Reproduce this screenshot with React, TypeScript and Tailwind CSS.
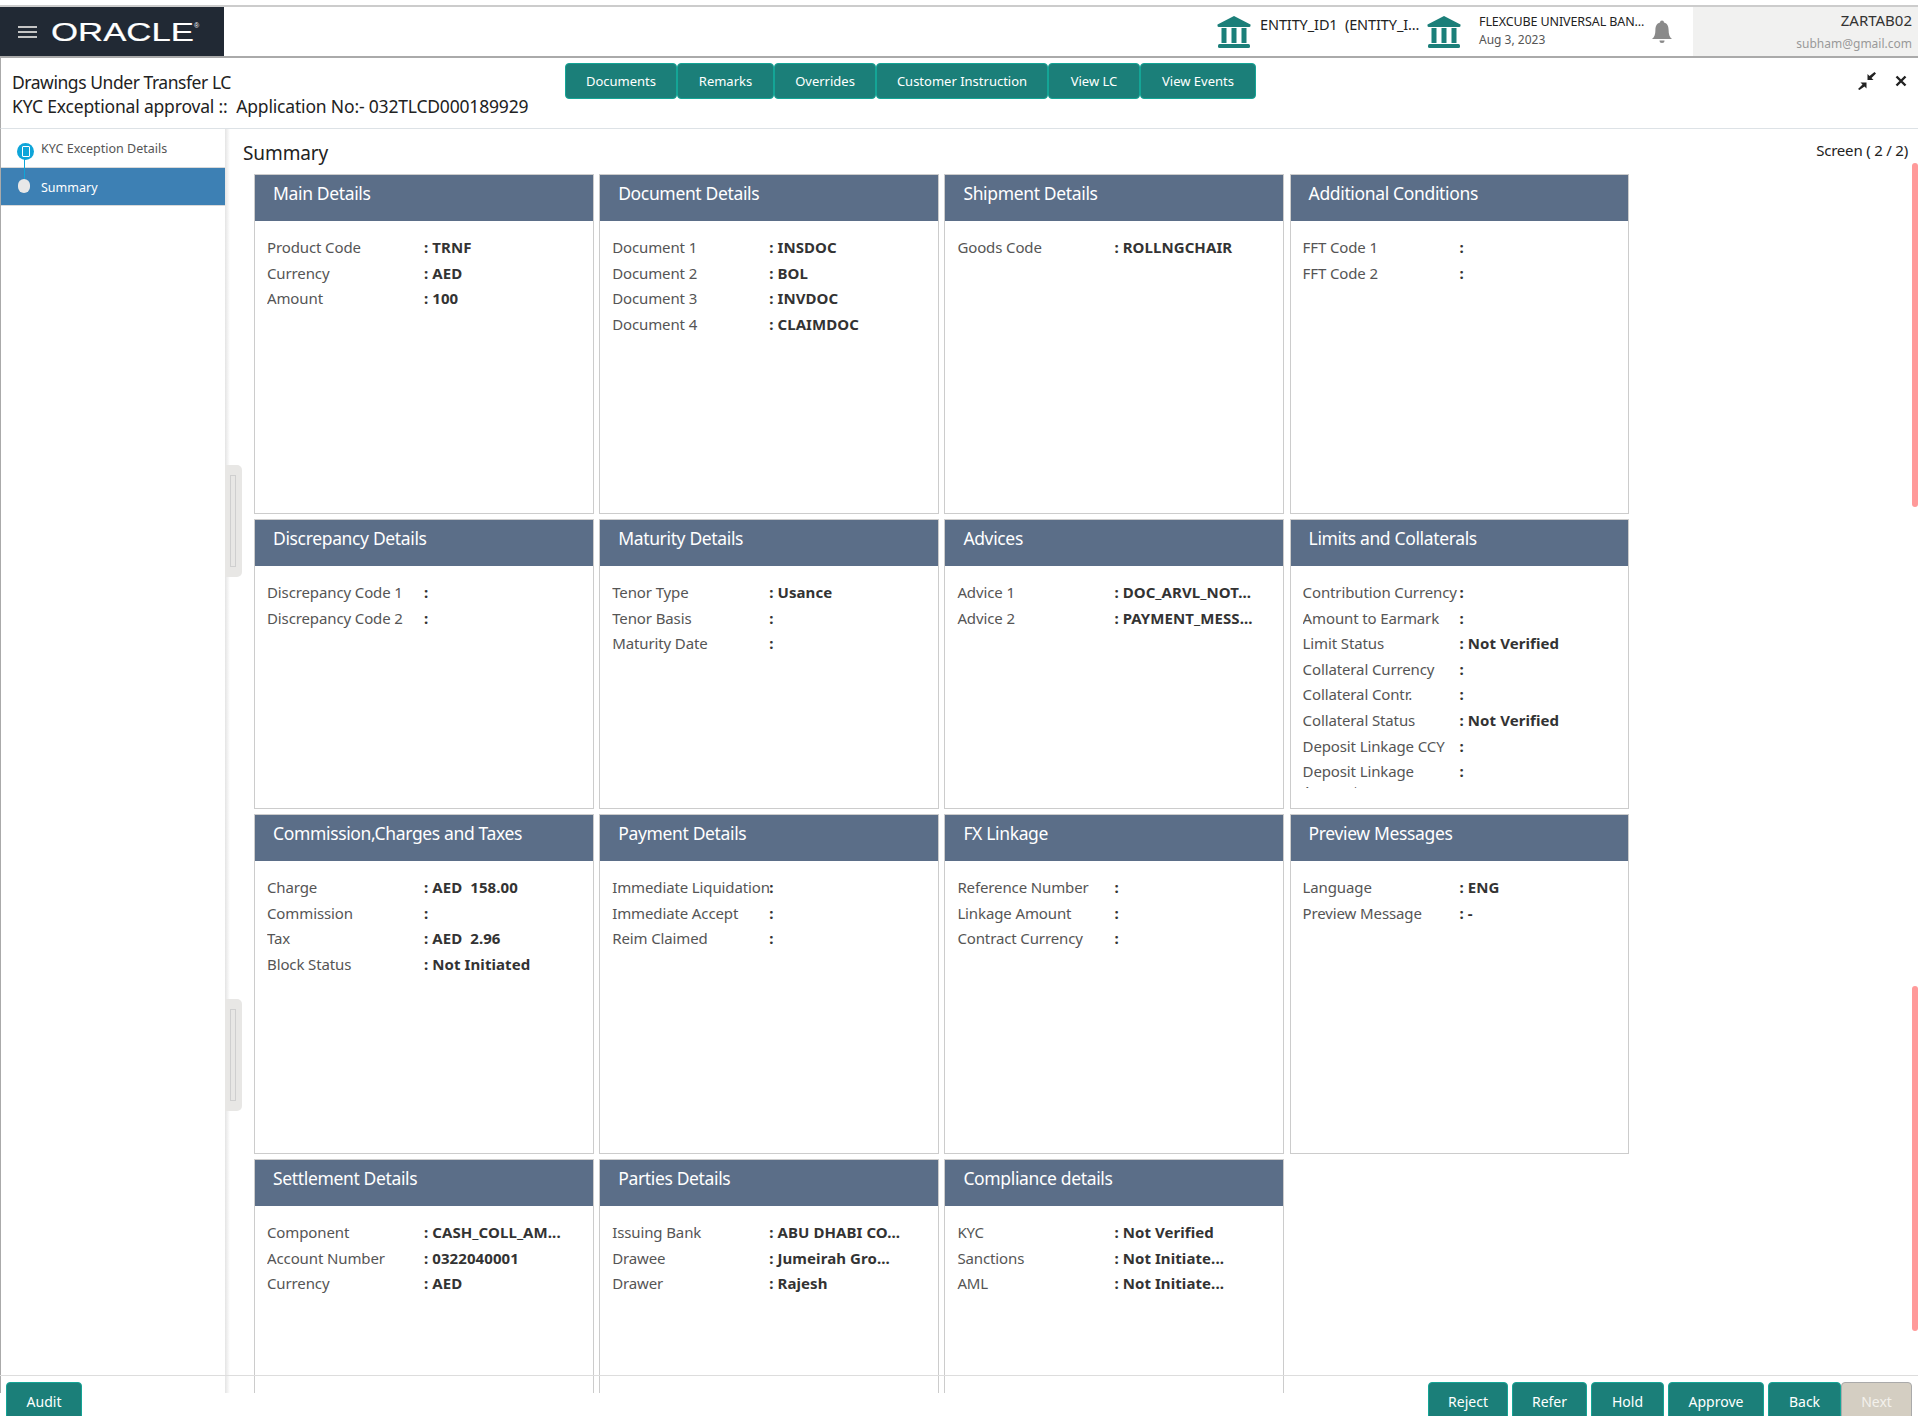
import React from "react";

const font = "font-['Noto_Sans','Open_Sans',sans-serif]";

type Row = [string, string?];
type Card = { title: string; rows: Row[] };

const cards: Card[] = [
  { title: "Main Details", rows: [["Product Code", "TRNF"], ["Currency", "AED"], ["Amount", "100"]] },
  { title: "Document Details", rows: [["Document 1", "INSDOC"], ["Document 2", "BOL"], ["Document 3", "INVDOC"], ["Document 4", "CLAIMDOC"]] },
  { title: "Shipment Details", rows: [["Goods Code", "ROLLNGCHAIR"]] },
  { title: "Additional Conditions", rows: [["FFT Code 1"], ["FFT Code 2"]] },
  { title: "Discrepancy Details", rows: [["Discrepancy Code 1"], ["Discrepancy Code 2"]] },
  { title: "Maturity Details", rows: [["Tenor Type", "Usance"], ["Tenor Basis"], ["Maturity Date"]] },
  { title: "Advices", rows: [["Advice 1", "DOC_ARVL_NOT..."], ["Advice 2", "PAYMENT_MESS..."]] },
  {
    title: "Limits and Collaterals",
    rows: [
      ["Contribution Currency"],
      ["Amount to Earmark"],
      ["Limit Status", "Not Verified"],
      ["Collateral Currency"],
      ["Collateral Contr."],
      ["Collateral Status", "Not Verified"],
      ["Deposit Linkage CCY"],
      ["Deposit Linkage\nAmount"],
    ],
  },
  { title: "Commission,Charges and Taxes", rows: [["Charge", "AED  158.00"], ["Commission"], ["Tax", "AED  2.96"], ["Block Status", "Not Initiated"]] },
  { title: "Payment Details", rows: [["Immediate Liquidation"], ["Immediate Accept"], ["Reim Claimed"]] },
  { title: "FX Linkage", rows: [["Reference Number"], ["Linkage Amount"], ["Contract Currency"]] },
  { title: "Preview Messages", rows: [["Language", "ENG"], ["Preview Message", "-"]] },
  { title: "Settlement Details", rows: [["Component", "CASH_COLL_AM..."], ["Account Number", "0322040001"], ["Currency", "AED"]] },
  { title: "Parties Details", rows: [["Issuing Bank", "ABU DHABI CO..."], ["Drawee", "Jumeirah Gro..."], ["Drawer", "Rajesh"]] },
  { title: "Compliance details", rows: [["KYC", "Not Verified"], ["Sanctions", "Not Initiate..."], ["AML", "Not Initiate..."]] },
];

const topActions = [
  { label: "Documents", w: "w-[112px]" },
  { label: "Remarks", w: "w-[97px]" },
  { label: "Overrides", w: "w-[102px]" },
  { label: "Customer Instruction", w: "w-[172px]" },
  { label: "View LC", w: "w-[92px]" },
  { label: "View Events", w: "w-[116px]" },
];

const footerActions = [
  { label: "Reject", w: "w-[80px]" },
  { label: "Refer", w: "w-[75px]" },
  { label: "Hold", w: "w-[73px]" },
  { label: "Approve", w: "w-[96px]" },
  { label: "Back", w: "w-[73px]" },
];

function BankIcon() {
  return (
    <svg viewBox="0 0 34 32" className="w-[34px] h-[32px] shrink-0" fill="#1b7f79">
      <path d="M17 0 33.5 8.5q.5 2-1 2.5H1.5Q0 10.5.5 8.5Z" />
      <rect x="4.5" y="12" width="5" height="15" />
      <rect x="14.5" y="12" width="5" height="15" />
      <rect x="24.5" y="12" width="5" height="15" />
      <rect x="1" y="28" width="32" height="4" rx="1.5" />
    </svg>
  );
}

function TealButton({ label, w, className = "" }: { label: string; w: string; className?: string }) {
  return (
    <button className={`${w} ${className} shrink-0 rounded-[4px] border border-[#14a596] bg-[#1b7f79] text-white`}>
      {label}
    </button>
  );
}

function SummaryCard({ card }: { card: Card }) {
  return (
    <div className="border border-[#cccccc] bg-white overflow-hidden">
      <div className="h-[46px] bg-[#5b6e88] pl-[18px] pt-[6px] text-[17.5px] leading-[24px] tracking-[-0.35px] text-white">{card.title}</div>
      <div className="ml-[12px] mt-[13.2px] h-[209px] overflow-hidden">
        {card.rows.map(([label, value]) => (
          <div key={label} className="flex py-[2.8px] text-[15px] leading-[20px]">
            <div className="w-[157px] shrink-0 whitespace-pre tracking-[-0.12px] text-[#555555]">{label}</div>
            <div className="font-bold tracking-[0.08px] text-[#333333] whitespace-pre">{value ? `: ${value}` : ":"}</div>
          </div>
        ))}
      </div>
    </div>
  );
}

export default function App() {
  return (
    <div className={`${font} relative w-[1918px] h-[1416px] overflow-hidden bg-white`}>
      <div className="h-[7px] border-b-2 border-[#cccccc]" />

      {/* top bar */}
      <header className="flex h-[51px] border-b-2 border-[#aaaaaa]">
        <div className="flex w-[224px] shrink-0 items-center bg-[#212934] pl-[18px]">
          <div className="flex w-[19px] flex-col gap-[3px]">
            <span className="h-[2px] bg-[#c4c4c4]" />
            <span className="h-[2px] bg-[#c4c4c4]" />
            <span className="h-[2px] bg-[#c4c4c4]" />
          </div>
          <svg viewBox="0 0 150 24" className="ml-[14px] h-[24px] w-[150px] overflow-visible">
            <text x="0" y="20.5" fontFamily="Liberation Sans" fontSize="25" fill="white" stroke="white" strokeWidth="0.2" textLength="143" lengthAdjust="spacingAndGlyphs">
              ORACLE
            </text>
            <text x="143" y="8" fontFamily="Liberation Sans" fontSize="7" fill="white">®</text>
          </svg>
        </div>
        <div className="flex flex-1 items-center">
          <div className="ml-auto flex items-center">
            <BankIcon />
            <div className="ml-[9px] w-[167px] -mt-[14px] whitespace-pre text-[14.5px] tracking-[-0.1px] text-[#222222]">ENTITY_ID1  (ENTITY_I...</div>
            <BankIcon />
            <div className="ml-[18px] w-[171px] -mt-[2px] leading-[18px]">
              <div className="text-[12.5px] tracking-[-0.1px] text-[#222222] whitespace-nowrap">FLEXCUBE UNIVERSAL BAN...</div>
              <div className="text-[12px] text-[#555555]">Aug 3, 2023</div>
            </div>
            <svg viewBox="0 0 24 26" className="h-[26px] w-[24px]" fill="#8a8a8a">
              <path d="M12 1.5a2 2 0 0 1 2 2c3.4 1 4.6 3.8 4.6 7.5 0 4.5 1 7 3.4 9H2c2.4-2 3.4-4.5 3.4-9 0-3.7 1.2-6.5 4.6-7.5a2 2 0 0 1 2-2Z" />
              <path d="M9.5 21.5h5a2.5 2.5 0 0 1-5 0Z" />
            </svg>
            <div className="ml-[19px] flex h-[49px] w-[225px] flex-col items-end justify-center gap-[3px] bg-[#f1f1f0] pr-[6px] leading-[20px]">
              <div className="text-[15px] text-[#333333]">ZARTAB02</div>
              <div className="mt-[1px] text-[12px] text-[#999999]">subham@gmail.com</div>
            </div>
          </div>
        </div>
      </header>

      {/* sub header */}
      <div className="relative flex h-[71px] border-b border-[#dde2e6] border-l border-l-[#aaaaaa]">
        <div className="w-[551px] shrink-0 pl-[11px] pt-[12px] text-[17.5px] leading-[24px] tracking-[-0.18px] text-[#222222]">
          <div className="tracking-[-0.45px]">Drawings Under Transfer LC</div>
          <div className="whitespace-pre">KYC Exceptional approval ::  Application No:- 032TLCD000189929</div>
        </div>
        <div className="mt-[5px] ml-[13px] flex h-[36px] text-[13px]">
          {topActions.map((a) => (
            <TealButton key={a.label} label={a.label} w={a.w} className="pt-[2px]" />
          ))}
        </div>
        <div className="ml-auto mr-[11px] mt-[14px] flex h-[18px] items-center gap-[18px]">
          <svg viewBox="0 0 20 18" className="h-[18px] w-[20px]" fill="#222222">
            <path d="M19 1.5 14.5 6l2 2H10.5V2l2 2L17.5 0Z" />
            <path d="M1 17 5.5 12.5l-2-2H9.5v6l-2-2L2.5 18Z" />
          </svg>
          <svg viewBox="0 0 12 12" className="h-[12px] w-[12px]" stroke="#222222" strokeWidth="2.4">
            <path d="M1.5 1.5l9 9M10.5 1.5l-9 9" />
          </svg>
        </div>
      </div>

      {/* body */}
      <div className="flex h-[1264px] overflow-hidden">
        <aside className="w-[225px] shrink-0 border-l border-[#aaaaaa] relative text-[12.5px]">
          <div className="flex h-[39px] items-center border-b border-[#d9d9d9] pl-[40px] pt-[2px] text-[#555555]">KYC Exception Details</div>
          <div className="flex h-[38px] items-center border-b border-[#d9d9d9] bg-[#3d80b4] pl-[40px] pt-[3px] text-white">Summary</div>
          {/* stepper */}
          <div className="absolute left-[23px] top-[28px] h-[25px] w-[1px] bg-[#0ea5d9]" />
          <div className="absolute left-[16px] top-[14px] flex h-[17px] w-[17px] items-center justify-center rounded-full bg-[#0ea5d9]">
            <div className="h-[11px] w-[8px] rounded-[1px] border-[1.5px] border-white" />
          </div>
          <div className="absolute left-[17px] top-[50px] h-[14px] w-[12px] rounded-full bg-[#e8e8e8]" />
        </aside>
        <main className="relative flex-1 bg-gradient-to-r from-[#e4e4e4] to-white to-[5px] bg-[length:5px_100%] bg-no-repeat">
          <div className="flex h-[45px] items-start justify-between pl-[18px] pr-[10px]">
            <div className="mt-[10px] text-[19px] leading-[28px] tracking-[-0.1px] text-[#222222]">Summary</div>
            <div className="mt-[11px] text-[15px] leading-[20px] tracking-[-0.2px] text-[#222222]">Screen ( 2 / 2)</div>
          </div>
          <div className="ml-[29px] grid grid-cols-[repeat(4,339.5px)] grid-rows-[340px_290px_340px_340px] gap-x-[5.7px] gap-y-[5px]">
            {cards.map((c) => (
              <SummaryCard key={c.title} card={c} />
            ))}
          </div>
        </main>
      </div>

      {/* overlays */}
      <div className="absolute left-[225px] top-[465px] flex h-[112px] w-[17px] items-center rounded-r-[5px] bg-[#e8e7e5] pl-[5px]">
        <div className="h-[92px] w-[6px] border border-[#cfcfcf]" />
      </div>
      <div className="absolute left-[225px] top-[999px] flex h-[112px] w-[17px] items-center rounded-r-[5px] bg-[#e8e7e5] pl-[5px]">
        <div className="h-[92px] w-[6px] border border-[#cfcfcf]" />
      </div>
      <div className="absolute right-0 top-[163px] h-[344px] w-[6px] rounded-[3px] bg-[#ff9a9a]" />
      <div className="absolute right-0 top-[986px] h-[345px] w-[6px] rounded-[3px] bg-[#ff9a9a]" />

      {/* footer */}
      <footer className="absolute inset-x-0 top-[1375px] flex h-[45px] border-t border-[#dddddd] pt-[6px] pl-[6px] text-[14px]">
        <TealButton label="Audit" w="w-[76px]" />
        <div className="ml-auto mr-[6px] flex gap-[4px]">
          {footerActions.map((a) => (
            <TealButton key={a.label} label={a.label} w={a.w} />
          ))}
          <button className="-ml-[4px] w-[71px] rounded-[4px] border border-[#aaaaaa] bg-[#d4cec2] text-[#f3f1ec]">Next</button>
        </div>
      </footer>
    </div>
  );
}
